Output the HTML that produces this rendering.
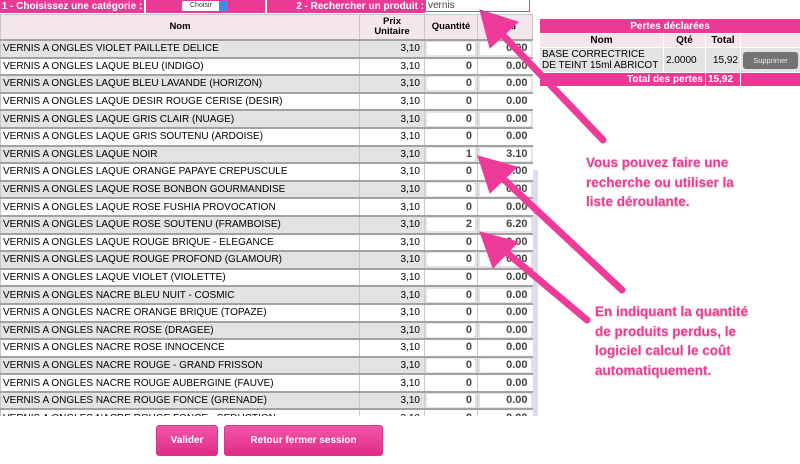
<!DOCTYPE html>
<html><head><meta charset="utf-8"><style>
body{margin:0;width:800px;height:464px;background:#fff;position:relative;overflow:hidden;font-family:"Liberation Sans",Arial,sans-serif}
.bar{position:absolute;top:0;height:13px;background:#ea3a96;color:#fff;font-weight:bold;font-size:10px;line-height:13px}
table{border-collapse:collapse}
#t{position:absolute;left:0;top:14px;width:533px;font-size:10px}
#t th{background:#f5e6ee;font-size:9.5px;font-weight:bold;border:1px solid #c8c8c8;height:22px;line-height:10px}
#t td{height:15.6px;padding:0 2px;border-top:2px solid #a2a2a2;border-left:1px solid #c8c8c8;white-space:nowrap;overflow:hidden}
#t tr.g td{background:#e3e3e3}
#t td.n{text-align:right;padding-right:4px}
#t td.q,#t td.v{text-align:right;font-weight:bold;font-size:11px;color:#444}
#t td.q span,#t td.v span{display:block;background:#fff;border-radius:2px;padding-right:3px;line-height:13px}
#clip{position:absolute;left:0;top:0;width:540px;height:416px;overflow:hidden}
#p{position:absolute;left:539px;top:18px;width:261px;border-collapse:collapse;font-size:10px;table-layout:fixed}
#p td{padding:1px 2px;border:1px solid #fff}
.btn{position:absolute;top:425px;height:29px;background:linear-gradient(#f056a8,#e02c88);border:1px solid #d03c8a;border-radius:3px;color:#fff;font-weight:bold;font-size:10px;text-align:center;line-height:29px}
.note{position:absolute;color:#ec3a95;font-weight:bold;font-size:13.5px;line-height:19.5px;text-shadow:0 1px 2px rgba(0,0,0,.25)}
</style></head><body>
<div id="clip">
<table id="t">
<tr><th style="width:356px">Nom</th><th style="width:62px">Prix<br>Unitaire</th><th style="width:50px">Quantité</th><th>Total</th></tr>
<tr class="g"><td>VERNIS A ONGLES VIOLET PAILLETE DELICE</td><td class="n">3,10</td><td class="q"><span>0</span></td><td class="v"><span>0.00</span></td></tr>
<tr><td>VERNIS A ONGLES LAQUE BLEU (INDIGO)</td><td class="n">3,10</td><td class="q"><span>0</span></td><td class="v"><span>0.00</span></td></tr>
<tr class="g"><td>VERNIS A ONGLES LAQUE BLEU LAVANDE (HORIZON)</td><td class="n">3,10</td><td class="q"><span>0</span></td><td class="v"><span>0.00</span></td></tr>
<tr><td>VERNIS A ONGLES LAQUE DESIR ROUGE CERISE (DESIR)</td><td class="n">3,10</td><td class="q"><span>0</span></td><td class="v"><span>0.00</span></td></tr>
<tr class="g"><td>VERNIS A ONGLES LAQUE GRIS CLAIR (NUAGE)</td><td class="n">3,10</td><td class="q"><span>0</span></td><td class="v"><span>0.00</span></td></tr>
<tr><td>VERNIS A ONGLES LAQUE GRIS SOUTENU (ARDOISE)</td><td class="n">3,10</td><td class="q"><span>0</span></td><td class="v"><span>0.00</span></td></tr>
<tr class="g"><td>VERNIS A ONGLES LAQUE NOIR</td><td class="n">3,10</td><td class="q"><span>1</span></td><td class="v"><span>3.10</span></td></tr>
<tr><td>VERNIS A ONGLES LAQUE ORANGE PAPAYE CREPUSCULE</td><td class="n">3,10</td><td class="q"><span>0</span></td><td class="v"><span>0.00</span></td></tr>
<tr class="g"><td>VERNIS A ONGLES LAQUE ROSE BONBON GOURMANDISE</td><td class="n">3,10</td><td class="q"><span>0</span></td><td class="v"><span>0.00</span></td></tr>
<tr><td>VERNIS A ONGLES LAQUE ROSE FUSHIA PROVOCATION</td><td class="n">3,10</td><td class="q"><span>0</span></td><td class="v"><span>0.00</span></td></tr>
<tr class="g"><td>VERNIS A ONGLES LAQUE ROSE SOUTENU (FRAMBOISE)</td><td class="n">3,10</td><td class="q"><span>2</span></td><td class="v"><span>6.20</span></td></tr>
<tr><td>VERNIS A ONGLES LAQUE ROUGE BRIQUE - ELEGANCE</td><td class="n">3,10</td><td class="q"><span>0</span></td><td class="v"><span>0.00</span></td></tr>
<tr class="g"><td>VERNIS A ONGLES LAQUE ROUGE PROFOND (GLAMOUR)</td><td class="n">3,10</td><td class="q"><span>0</span></td><td class="v"><span>0.00</span></td></tr>
<tr><td>VERNIS A ONGLES LAQUE VIOLET (VIOLETTE)</td><td class="n">3,10</td><td class="q"><span>0</span></td><td class="v"><span>0.00</span></td></tr>
<tr class="g"><td>VERNIS A ONGLES NACRE BLEU NUIT - COSMIC</td><td class="n">3,10</td><td class="q"><span>0</span></td><td class="v"><span>0.00</span></td></tr>
<tr><td>VERNIS A ONGLES NACRE ORANGE BRIQUE (TOPAZE)</td><td class="n">3,10</td><td class="q"><span>0</span></td><td class="v"><span>0.00</span></td></tr>
<tr class="g"><td>VERNIS A ONGLES NACRE ROSE (DRAGEE)</td><td class="n">3,10</td><td class="q"><span>0</span></td><td class="v"><span>0.00</span></td></tr>
<tr><td>VERNIS A ONGLES NACRE ROSE INNOCENCE</td><td class="n">3,10</td><td class="q"><span>0</span></td><td class="v"><span>0.00</span></td></tr>
<tr class="g"><td>VERNIS A ONGLES NACRE ROUGE - GRAND FRISSON</td><td class="n">3,10</td><td class="q"><span>0</span></td><td class="v"><span>0.00</span></td></tr>
<tr><td>VERNIS A ONGLES NACRE ROUGE AUBERGINE (FAUVE)</td><td class="n">3,10</td><td class="q"><span>0</span></td><td class="v"><span>0.00</span></td></tr>
<tr class="g"><td>VERNIS A ONGLES NACRE ROUGE FONCE (GRENADE)</td><td class="n">3,10</td><td class="q"><span>0</span></td><td class="v"><span>0.00</span></td></tr>
<tr><td>VERNIS A ONGLES NACRE ROUGE FONCE - SEDUCTION</td><td class="n">3,10</td><td class="q"><span>0</span></td><td class="v"><span>0.00</span></td></tr>
</table>
<div style="position:absolute;left:533px;top:170px;width:5px;height:246px;background:#dcdcee"></div>
</div>
<div class="bar" style="left:0;width:144px;text-align:center">1 - Choisissez une catégorie :</div>
<div class="bar" style="left:146px;width:119px"><div style="position:absolute;left:36px;top:1px;width:46px;height:10px;background:#fff;border-radius:2px;font-size:7px;color:#333;font-weight:normal;line-height:10px;padding-left:8px;box-sizing:border-box">Choisir<span style="position:absolute;right:0;top:0;width:9px;height:10px;background:#3d8ee8;border-radius:0 2px 2px 0"></span></div></div>
<div class="bar" style="left:267px;width:158px;text-align:right;padding-right:1px;box-sizing:border-box">2 - Rechercher un produit :</div>
<div style="position:absolute;left:425px;top:0;width:105px;height:12px;border:1px solid #ea3a96;border-top:none;font-size:10px;color:#444;line-height:11px;padding-left:2px;box-sizing:border-box">vernis</div>
<table id="p">
<colgroup><col style="width:124px"><col style="width:42px"><col style="width:35px"><col style="width:60px"></colgroup>
<tr><td colspan="4" style="background:#ea3a96;color:#fff;font-weight:bold;text-align:center;height:12px">Pertes déclarées</td></tr>
<tr style="background:#f5e6ee;font-weight:bold;text-align:center"><td>Nom</td><td>Qté</td><td>Total</td><td></td></tr>
<tr style="background:#e3e3e3"><td style="line-height:11px">BASE CORRECTRICE DE TEINT 15ml ABRICOT</td><td>2.0000</td><td style="text-align:right">15,92</td><td><div style="background:#737373;color:#eee;font-size:7.5px;text-align:center;border-radius:3px;line-height:17px">Supprimer</div></td></tr>
<tr style="background:#ea3a96;color:#fff;font-weight:bold"><td colspan="2" style="text-align:right">Total des pertes</td><td>15,92</td><td></td></tr>
</table>
<div class="btn" style="left:156px;width:60px">Valider</div>
<div class="btn" style="left:224px;width:157px">Retour fermer session</div>
<div class="note" style="left:586px;top:153px">Vous pouvez faire une<br>recherche ou utiliser la<br>liste déroulante.</div>
<div class="note" style="left:595px;top:302px">En indiquant la quantité<br>de produits perdus, le<br>logiciel calcul le coût<br>automatiquement.</div>
<svg style="position:absolute;left:0;top:0" width="800" height="464">
<g fill="#ee3a98" stroke="#ee3a98" stroke-width="7" stroke-linecap="round">
<line x1="603" y1="140" x2="498" y2="30"/>
<polygon stroke-width="1" points="480,10 518,22 490,48"/>
<line x1="622" y1="290" x2="497" y2="173"/>
<polygon stroke-width="1" points="478,156 517,167 490,193"/>
<line x1="587" y1="320" x2="500" y2="247"/>
<polygon stroke-width="1" points="480,232 518,242 493,268"/>
</g>
</svg>
</body></html>
